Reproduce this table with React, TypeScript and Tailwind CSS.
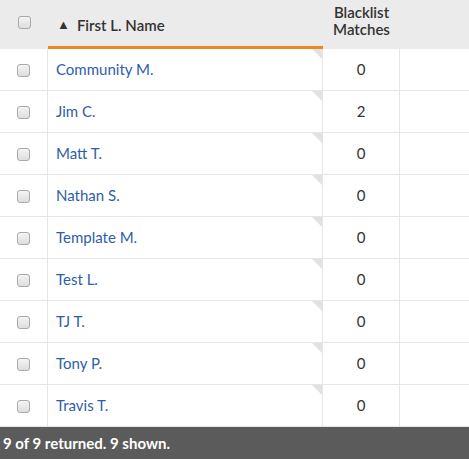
import React from "react";

const names = ["Community M.", "Jim C.", "Matt T.", "Nathan S.", "Template M.", "Test L.", "TJ T.", "Tony P.", "Travis T."];
const counts = [0, 2, 0, 0, 0, 0, 0, 0, 0];

function Box() {
  return (
    <div className="w-[13px] h-[13px] rounded-[3px] border border-[#a9a9a9] bg-gradient-to-b from-[#f4f4f4] to-[#dedede]" />
  );
}

export default function App() {
  return (
    <div className="w-[469px] h-[459px] bg-white flex flex-col overflow-hidden" style={{ fontFamily: "Lato, 'Open Sans', sans-serif" }}>
      <div className="flex h-[49px] bg-[#ebebeb] shrink-0">
        <div className="w-[48px] flex items-center justify-center pb-[4px]">
          <Box />
        </div>
        <div className="w-[275px] flex items-center pl-[9px] pt-[4px] border-b-[3px] border-[#e8891f] text-[15px] text-[#333] font-semibold">
          <span className="text-[13px] mr-[7px]">▲</span>
          <span>First L. Name</span>
        </div>
        <div className="w-[77px] flex flex-col items-center justify-center pb-[8px] text-[15px] leading-[17px] text-[#333] font-semibold">
          <span>Blacklist</span>
          <span>Matches</span>
        </div>
        <div className="flex-1" />
      </div>
      {names.map((n, i) => (
        <div key={n} className="flex h-[42px] border-b border-[#e6e6e6] shrink-0">
          <div className="w-[48px] border-r border-[#e6e6e6] flex items-center justify-center pt-[2px]">
            <Box />
          </div>
          <div className="relative w-[275px] border-r border-[#e6e6e6] flex items-center pl-[8px] text-[15px] text-[#2d5eab]">
            {n}
            <div className="absolute top-0 right-0 w-0 h-0 border-t-[10px] border-l-[10px] border-t-[#e2e2e2] border-l-transparent" />
          </div>
          <div className="w-[77px] border-r border-[#e6e6e6] flex items-center justify-center text-[15px] text-[#333]">
            {counts[i]}
          </div>
          <div className="flex-1" />
        </div>
      ))}
      <div className="flex-1 bg-[#5b5b5b] flex items-center pl-[3px] text-white text-[15px] font-bold">
        9 of 9 returned. 9 shown.
      </div>
    </div>
  );
}
